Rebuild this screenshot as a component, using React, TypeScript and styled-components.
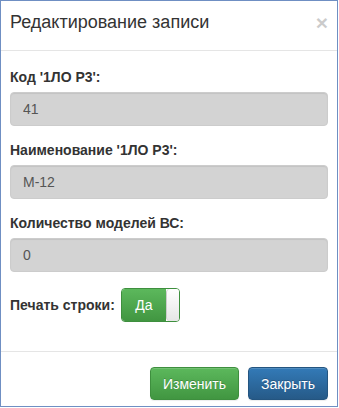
import React from "react";
import styled, { createGlobalStyle } from "styled-components";

const GlobalStyle = createGlobalStyle`
  html, body { margin: 0; padding: 0; background: #ffffff; }
  body { font-family: "Liberation Sans", Arial, sans-serif; font-size: 14px; color: #333333; }
  * { box-sizing: border-box; }
`;

const Modal = styled.div`
  width: 338px;
  height: 407px;
  border: 1px solid #6f8fc3;
  background: #ffffff;
  display: flex;
  flex-direction: column;
`;

const Header = styled.div`
  display: flex;
  align-items: flex-start;
  justify-content: space-between;
  height: 50px;
  padding: 9px 9px 0 9px;
  border-bottom: 1px solid #e5e5e5;
`;

const Title = styled.h4`
  margin: 0;
  font-size: 18px;
  font-weight: normal;
  line-height: 25px;
  color: #333333;
`;

const Close = styled.button`
  border: 0;
  background: transparent;
  padding: 0;
  margin: 2px 0 0 0;
  font-family: "Liberation Sans", Arial, sans-serif;
  font-size: 21px;
  font-weight: bold;
  line-height: 1;
  color: #000000;
  opacity: 0.2;
  cursor: pointer;
`;

const Body = styled.div`
  flex: 1;
  padding: 16px 9px 0 9px;
  display: flex;
  flex-direction: column;
  gap: 14px;
`;

const Group = styled.div`
  display: flex;
  flex-direction: column;
`;

const Label = styled.label`
  font-weight: bold;
  font-size: 14px;
  line-height: 20px;
  margin-bottom: 5px;
  color: #333333;
`;

const Input = styled.input`
  height: 34px;
  width: 100%;
  padding: 6px 12px;
  font-family: "Liberation Sans", Arial, sans-serif;
  font-size: 14px;
  color: #555555;
  background: #d3d3d3;
  border: 1px solid #cccccc;
  border-radius: 4px;
  box-shadow: inset 0 1px 1px rgba(0, 0, 0, 0.075);
  outline: none;
`;

const InlineGroup = styled.div`
  display: flex;
  align-items: center;
  gap: 6px;
  margin-top: 2px;
`;

const InlineLabel = styled(Label)`
  margin-bottom: 0;
`;

const Switch = styled.div`
  display: flex;
  height: 34px;
  width: 59px;
  border: 1px solid #3e8f3e;
  border-radius: 4px;
  overflow: hidden;
`;

const SwitchOn = styled.span`
  flex: 1;
  display: flex;
  align-items: center;
  justify-content: center;
  color: #ffffff;
  font-size: 14px;
  background: linear-gradient(to bottom, #5cb85c 0%, #419641 100%);
`;

const SwitchHandle = styled.span`
  width: 13px;
  background: linear-gradient(to bottom, #ffffff 0%, #e6e6e6 100%);
  border-left: 1px solid #cccccc;
  border-radius: 4px 0 0 4px;
`;

const Footer = styled.div`
  height: 55px;
  border-top: 1px solid #e5e5e5;
  padding: 15px 9px 0 9px;
  display: flex;
  justify-content: flex-end;
  align-items: flex-start;
  gap: 9px;
`;

const Button = styled.button<{ $variant: "success" | "primary" }>`
  height: 33px;
  padding: 6px 12px;
  font-family: "Liberation Sans", Arial, sans-serif;
  font-size: 14px;
  line-height: 20px;
  color: #ffffff;
  border-radius: 4px;
  cursor: pointer;
  text-shadow: 0 -1px 0 rgba(0, 0, 0, 0.2);
  box-shadow: inset 0 1px 0 rgba(255, 255, 255, 0.15), 0 1px 1px rgba(0, 0, 0, 0.075);
  border: 1px solid ${(p) => (p.$variant === "success" ? "#3e8f3e" : "#245580")};
  background: ${(p) =>
    p.$variant === "success"
      ? "linear-gradient(to bottom, #5cb85c 0%, #419641 100%)"
      : "linear-gradient(to bottom, #337ab7 0%, #265a88 100%)"};
`;

const fields = [
  { label: "Код '1ЛО Р3':", value: "41" },
  { label: "Наименование '1ЛО Р3':", value: "М-12" },
  { label: "Количество моделей ВС:", value: "0" },
];

export default function App() {
  return (
    <>
      <GlobalStyle />
      <Modal>
        <Header>
          <Title>Редактирование записи</Title>
          <Close aria-label="Close">×</Close>
        </Header>
        <Body>
          {fields.map((f) => (
            <Group key={f.label}>
              <Label>{f.label}</Label>
              <Input value={f.value} disabled readOnly />
            </Group>
          ))}
          <InlineGroup>
            <InlineLabel>Печать строки:</InlineLabel>
            <Switch>
              <SwitchOn>Да</SwitchOn>
              <SwitchHandle />
            </Switch>
          </InlineGroup>
        </Body>
        <Footer>
          <Button $variant="success">Изменить</Button>
          <Button $variant="primary">Закрыть</Button>
        </Footer>
      </Modal>
    </>
  );
}
